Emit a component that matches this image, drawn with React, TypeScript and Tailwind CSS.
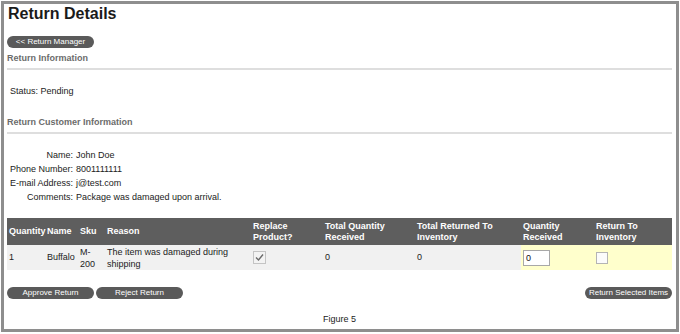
import React from "react"

const font = { fontFamily: '"Liberation Sans", Arial, sans-serif' }

function PillButton({ label, className = "" }: { label: string; className?: string }) {
  return (
    <button
      type="button"
      className={`h-[12px] rounded-full bg-[#5a5a5a] text-white text-[8px] leading-[12px] text-center ${className}`}
    >
      {label}
    </button>
  )
}

function SectionHeading({ children }: { children: React.ReactNode }) {
  return (
    <>
      <div className="text-[9px] leading-[14px] font-bold text-[#6b6b6b]">{children}</div>
      <div className="mt-[3px] h-[2px] bg-[#dedede] mr-[4px]" />
    </>
  )
}

function CheckedBox() {
  return (
    <svg width="13" height="13" viewBox="0 0 13 13">
      <rect x="0.5" y="0.5" width="12" height="12" fill="#f3f3f3" stroke="#c4c4c4" />
      <path d="M3 6.5 L5.5 9 L10 3.5" fill="none" stroke="#6a6a6a" strokeWidth="1.4" />
    </svg>
  )
}

function EmptyBox() {
  return (
    <svg width="12" height="12" viewBox="0 0 12 12">
      <rect x="0.5" y="0.5" width="11" height="11" fill="#fbfbfb" stroke="#b4b4b4" />
    </svg>
  )
}

const headers = [
  { label: "Quantity", w: "w-[38px]" },
  { label: "Name", w: "w-[33px]" },
  { label: "Sku", w: "w-[27px]" },
  { label: "Reason", w: "w-[146px]" },
  { label: "Replace Product?", w: "w-[72px]" },
  { label: "Total Quantity Received", w: "w-[92px]" },
  { label: "Total Returned To Inventory", w: "w-[106px]" },
  { label: "Quantity Received", w: "w-[73px]" },
  { label: "Return To Inventory", w: "w-[78px]" },
]

const customer = [
  ["Name:", "John Doe"],
  ["Phone Number:", "8001111111"],
  ["E-mail Address:", "j@test.com"],
  ["Comments:", "Package was damaged upon arrival."],
]

export default function App() {
  return (
    <div className="w-[680px] h-[334px] bg-white pt-px pl-px" style={font}>
      <div className="w-[678px] h-[331px] border-[3px] border-[#8e8e8e] bg-white text-[#222] pl-[3px]">
        <h1 className="text-[16px] leading-[20px] font-bold text-[#1a1a1a] pl-px">Return Details</h1>

        <PillButton label="<< Return Manager" className="mt-[12px] w-[87px] block" />

        <div className="mt-[3px]">
          <SectionHeading>Return Information</SectionHeading>
        </div>

        <div className="mt-[14px] text-[9px] leading-[14px] pl-[3px]">Status: Pending</div>

        <div className="mt-[17px]">
          <SectionHeading>Return Customer Information</SectionHeading>
        </div>

        <div className="mt-[14px] grid grid-cols-[66px_1fr] gap-x-[3px] text-[9px] leading-[14px]">
          {customer.map(([k, v]) => (
            <React.Fragment key={k}>
              <div className="text-right">{k}</div>
              <div>{v}</div>
            </React.Fragment>
          ))}
        </div>

        <table className="mt-[14px] w-[665px] table-fixed border-collapse text-[9px] leading-[11px]">
          <thead>
            <tr className="h-[27px] bg-[#5e5e5e] text-white">
              {headers.map((h) => (
                <th key={h.label} className={`${h.w} font-bold text-left align-middle px-[2px]`}>
                  {h.label}
                </th>
              ))}
            </tr>
          </thead>
          <tbody>
            <tr className="h-[25px] align-middle">
              <td className="bg-[#f1f1f1] px-[2px]">1</td>
              <td className="bg-[#f1f1f1] px-[2px]">Buffalo</td>
              <td className="bg-[#f1f1f1] px-[2px] leading-[12px]">
                M-
                <br />
                200
              </td>
              <td className="bg-[#f1f1f1] px-[2px] leading-[12px]">The item was damaged during shipping</td>
              <td className="bg-[#f1f1f1] px-[2px]">
                <div className="flex items-center">
                  <CheckedBox />
                </div>
              </td>
              <td className="bg-[#f1f1f1] px-[2px]">0</td>
              <td className="bg-[#f1f1f1] px-[2px]">0</td>
              <td className="bg-[#ffffcc] px-[2px]">
                <div className="w-[27px] h-[16px] border border-[#a8a8a8] bg-white text-[9px] leading-[14px] pl-[2px] text-[#111]">
                  0
                </div>
              </td>
              <td className="bg-[#ffffcc] px-[2px]">
                <div className="flex items-center">
                  <EmptyBox />
                </div>
              </td>
            </tr>
          </tbody>
        </table>

        <div className="mt-[17px] flex items-center w-[665px]">
          <PillButton label="Approve Return" className="w-[87px]" />
          <PillButton label="Reject Return" className="w-[87px] ml-[2px]" />
          <PillButton label="Return Selected Items" className="w-[87px] ml-auto" />
        </div>

        <div className="mt-[13px] text-[9px] leading-[14px] text-center w-[665px]">Figure 5</div>
      </div>
    </div>
  )
}
